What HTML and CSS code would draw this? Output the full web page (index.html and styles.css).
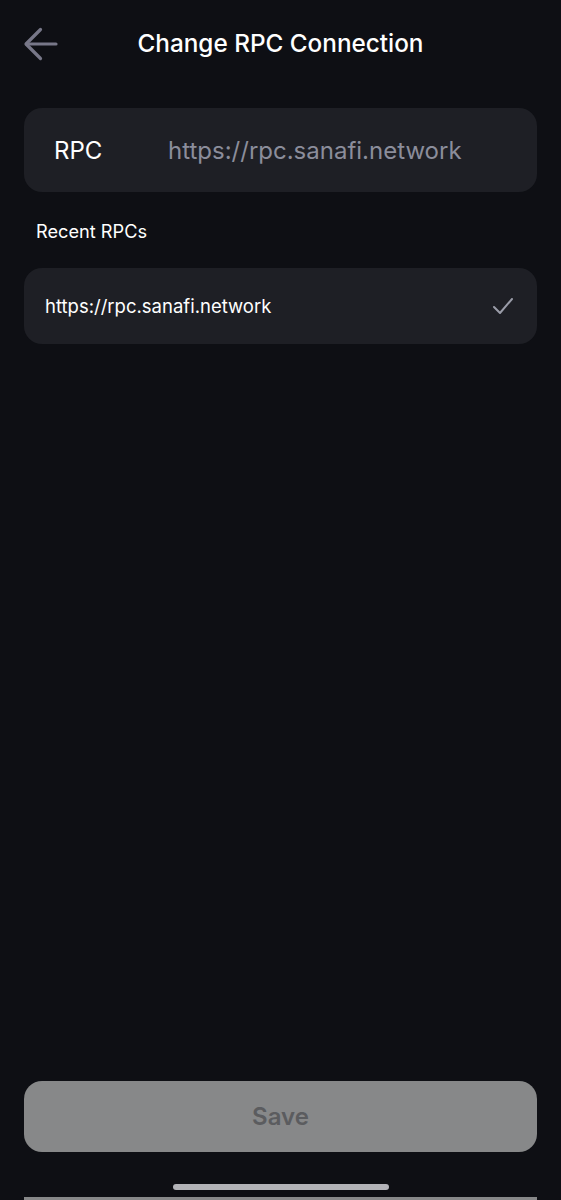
FILE: index.html
```html
<!DOCTYPE html>
<html>
<head>
<meta charset="utf-8">
<link rel="stylesheet" href="styles.css">
</head>
<body>
<div class="screen">
  <header class="topbar">
    <button class="back" aria-label="Back">
      <svg width="36" height="36" viewBox="0 0 36 36" fill="none" stroke="#777788" stroke-width="3.2" stroke-linecap="round" stroke-linejoin="round">
        <path d="M33 18H3.5"/>
        <path d="M17.5 3.5L3 18l14.5 14.5"/>
      </svg>
    </button>
    <h1 class="title">Change RPC Connection</h1>
  </header>

  <div class="field">
    <span class="field-label">RPC</span>
    <span class="field-value">https://rpc.sanafi.network</span>
  </div>

  <div class="section-label">Recent RPCs</div>

  <div class="recent-item">
    <span class="recent-url">https://rpc.sanafi.network</span>
    <svg class="check" width="22" height="18" viewBox="0 0 22 18" fill="none" stroke="#9a9ca8" stroke-width="2" stroke-linecap="round" stroke-linejoin="round">
      <path d="M2 10l6 6L20 2"/>
    </svg>
  </div>

  <div class="spacer"></div>

  <button class="save">Save</button>

  <div class="home-area">
    <div class="home-indicator"></div>
  </div>
  <div class="ghost"></div>
</div>
</body>
</html>
```
FILE: styles.css
```css
html, body {
  margin: 0;
  padding: 0;
  background: #0e0f14;
}
body {
  font-family: Inter, "Noto Sans", "Liberation Sans", sans-serif;
  color: #ffffff;
}
.screen {
  width: 561px;
  height: 1200px;
  display: flex;
  flex-direction: column;
  overflow: hidden;
  box-sizing: border-box;
  padding: 0 24px;
}
.topbar {
  position: relative;
  height: 86px;
  display: flex;
  align-items: center;
  justify-content: center;
}
.back {
  position: absolute;
  left: -1px;
  top: 26px;
  width: 36px;
  height: 36px;
  padding: 0;
  border: 0;
  background: transparent;
  display: flex;
}
.title {
  margin: 0;
  font-size: 24.3px;
  font-weight: 500;
  letter-spacing: 0;
  color: #ffffff;
}
.field {
  margin-top: 22px;
  height: 84px;
  border-radius: 18px;
  background: #1e1f25;
  display: flex;
  align-items: center;
  padding-left: 30px;
}
.field-label {
  width: 114px;
  font-size: 24px;
  color: #ffffff;
}
.field-value {
  font-size: 24px;
  color: #8b8d9b;
}
.section-label {
  margin-top: 27px;
  padding-left: 12px;
  font-size: 18.2px;
  line-height: 24px;
  color: #ffffff;
}
.recent-item {
  margin-top: 25px;
  height: 76px;
  border-radius: 18px;
  background: #1e1f25;
  display: flex;
  align-items: center;
  justify-content: space-between;
  padding: 0 23px 0 21px;
}
.recent-url {
  font-size: 18.5px;
  color: #ffffff;
}
.check {
  display: block;
}
.spacer {
  flex: 1;
}
.save {
  height: 71px;
  border: 0;
  border-radius: 18px;
  background: #878889;
  color: #5b5c5f;
  font-family: Inter, "Noto Sans", "Liberation Sans", sans-serif;
  font-size: 24px;
  font-weight: 600;
  padding: 0;
}
.home-area {
  height: 45px;
  display: flex;
  justify-content: center;
  align-items: flex-start;
  padding-top: 32px;
  box-sizing: border-box;
}
.home-indicator {
  width: 216px;
  height: 6px;
  border-radius: 3px;
  background: #b3b3b8;
}
.ghost {
  height: 3px;
  flex: none;
  background: #878889;
}
```
